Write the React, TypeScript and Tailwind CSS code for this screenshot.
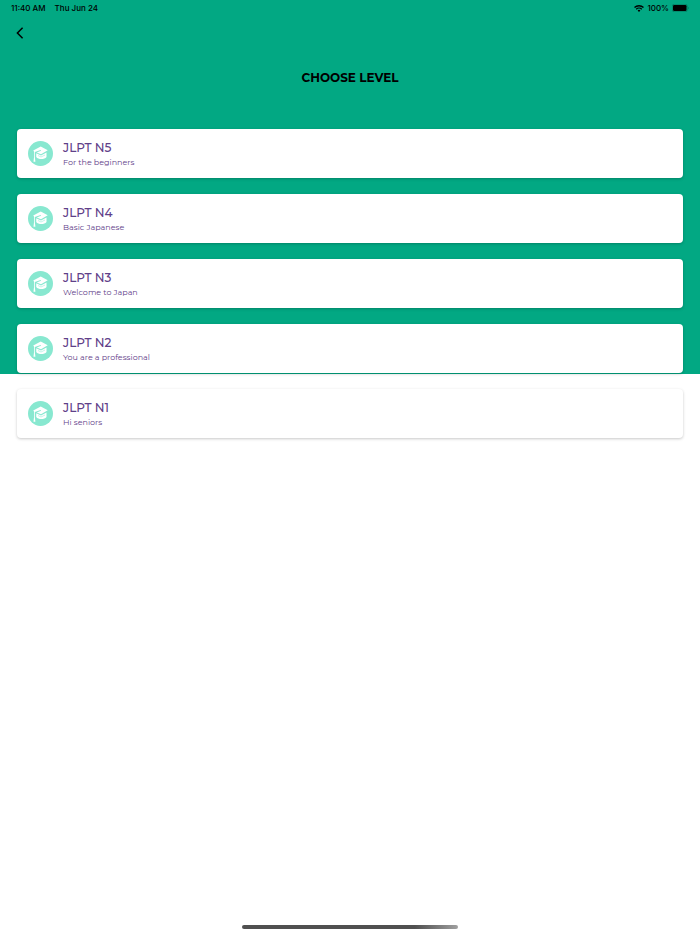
import React from 'react';

const levels = [
  { name: 'JLPT N5', note: 'For the beginners' },
  { name: 'JLPT N4', note: 'Basic Japanese' },
  { name: 'JLPT N3', note: 'Welcome to Japan' },
  { name: 'JLPT N2', note: 'You are a professional' },
  { name: 'JLPT N1', note: 'Hi seniors' },
];

const StatusBar: React.FC = () => (
  <div className="flex h-4 items-center justify-between px-[11px] font-['Inter',sans-serif] text-[8px] leading-4 font-medium">
    <div className="flex gap-[9px]">
      <span>11:40 AM</span>
      <span>Thu Jun 24</span>
    </div>
    <div className="flex items-center gap-[3px]">
      <svg viewBox="0 0 20 14" className="h-[7px] w-[10px]" aria-hidden="true">
        <path d="M1 5.2a13 13 0 0 1 18 0" fill="none" stroke="black" strokeWidth="2.8" />
        <path d="M4.4 8.6a8 8 0 0 1 11.2 0" fill="none" stroke="black" strokeWidth="2.4" />
        <path d="M7.2 11a4 4 0 0 1 5.6 0L10 14z" />
      </svg>
      <span>100%</span>
      <svg viewBox="0 0 34 16" className="h-2 w-[17px]" aria-hidden="true">
        <rect x="0.5" y="0.5" width="30" height="15" rx="4" fill="none" stroke="black" strokeOpacity="0.4" />
        <rect x="2" y="2" width="27" height="12" rx="2.5" />
        <path d="M32 5.5q2 2.5 0 5z" fillOpacity="0.5" />
      </svg>
    </div>
  </div>
);

const CapIcon: React.FC = () => (
  <svg viewBox="0 0 50 50" className="size-[25px] shrink-0" aria-hidden="true">
    <circle cx="25" cy="25" r="25" fill="#88e8d0" />
    <g fill="white">
      <path d="M25.5 11 39.5 18.5 26 26.5 17.5 22.8 26 19.5 25.3 18 13.6 22V34h-1.6V21L10.5 19z" />
      <path d="M16.5 24.5 26 29.2 37 23v9c-4 5.5-16.5 5.5-20.5 0z" />
      <path d="M12 33h1.8l1 8.5h-3.8z" />
    </g>
    <path d="M20 29 26 32 34 28" fill="none" stroke="#88e8d0" strokeWidth="1" />
  </svg>
);

const App: React.FC = () => {
  return (
    <div className="flex min-h-screen flex-col bg-[linear-gradient(#02a883_40%,#ffffff_40%)] font-['Montserrat','Inter',sans-serif] text-black">
      <StatusBar />

      <header>
        <button type="button" aria-label="Back" className="ml-3 flex h-[34px] w-8 items-center pl-1">
          <svg viewBox="0 0 8 12" className="h-3 w-2" aria-hidden="true">
            <path d="M6.6 0.8 1.4 6l5.2 5.2" fill="none" stroke="black" strokeWidth="1.5" />
          </svg>
        </button>
        <h1 className="mt-5 text-center text-[12px] leading-4 font-bold">CHOOSE LEVEL</h1>
      </header>

      <main className="mt-[43px] flex flex-1 flex-col gap-4 px-[17px]">
        {levels.map((level) => (
          <button
            key={level.name}
            type="button"
            className="flex h-[49px] items-center gap-[10px] rounded bg-white px-[11px] text-left text-[#5f4089] shadow-[0_1px_3px_rgba(0,0,0,0.22)]"
          >
            <CapIcon />
            <span className="flex flex-col">
              <span className="text-[12px] leading-4 font-medium">{level.name}</span>
              <span className="text-[8px] leading-3">{level.note}</span>
            </span>
          </button>
        ))}
      </main>

      <footer className="flex justify-center pb-[5px]">
        <div className="h-1 w-[216px] rounded-full bg-linear-to-r from-[#505050] from-80% to-[#a0a0a0]" />
      </footer>
    </div>
  );
};

export default App;
